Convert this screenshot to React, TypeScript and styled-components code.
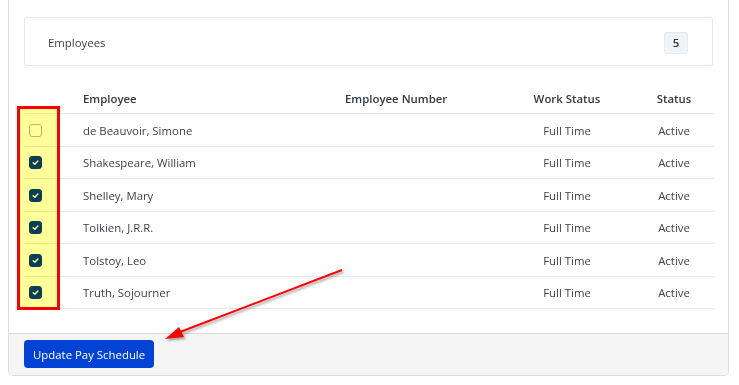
import styled, { createGlobalStyle } from 'styled-components';

const GlobalStyle = createGlobalStyle`
    html, body {
        margin: 0;
        padding: 0;
        background: #ffffff;
    }
    body {
        font-family: 'Open Sans', 'Noto Sans', 'Liberation Sans', sans-serif;
        font-size: 11.4px;
        color: #3d4250;
    }
`;

type T_Employee = {
    name: string;
    number: string;
    workStatus: string;
    status: string;
    checked: boolean;
};

const employees: T_Employee[] = [
    { name: 'de Beauvoir, Simone', number: '', workStatus: 'Full Time', status: 'Active', checked: false },
    { name: 'Shakespeare, William', number: '', workStatus: 'Full Time', status: 'Active', checked: true },
    { name: 'Shelley, Mary', number: '', workStatus: 'Full Time', status: 'Active', checked: true },
    { name: 'Tolkien, J.R.R.', number: '', workStatus: 'Full Time', status: 'Active', checked: true },
    { name: 'Tolstoy, Leo', number: '', workStatus: 'Full Time', status: 'Active', checked: true },
    { name: 'Truth, Sojourner', number: '', workStatus: 'Full Time', status: 'Active', checked: true },
];

const CheckBox = ({ checked }: { checked: boolean }) => (
    <Box checked={checked}>
        {checked && (
            <svg width="9" height="9" viewBox="0 0 10 10">
                <path
                    d="M2.4 5.2 L4.3 6.9 L7.6 3.4"
                    fill="none"
                    stroke="#ffffff"
                    strokeWidth="1.6"
                    strokeLinecap="round"
                    strokeLinejoin="round"
                />
            </svg>
        )}
    </Box>
);

const Annotations = () => (
    <>
        <Highlight />
        <ArrowSvg width="739" height="385" viewBox="0 0 739 385">
            <defs>
                <filter id="shadow" x="-10%" y="-10%" width="120%" height="130%">
                    <feDropShadow dx="1.5" dy="2" stdDeviation="1" floodColor="#000" floodOpacity="0.35" />
                </filter>
            </defs>
            <g filter="url(#shadow)">
                <line x1="342" y1="270" x2="180" y2="332" stroke="#ff0000" strokeWidth="2" />
                <polygon points="165,339 179,327 184,337" fill="#ff0000" />
            </g>
        </ArrowSvg>
    </>
);

export default function App() {
    return (
        <>
            <GlobalStyle />
            <Page>
                <Card>
                    <Body>
                        <CountBox>
                            <span>Employees</span>
                            <Badge>5</Badge>
                        </CountBox>
                        <Table>
                            <colgroup>
                                <col style={{ width: 47 }} />
                                <col style={{ width: 262 }} />
                                <col style={{ width: 167 }} />
                                <col style={{ width: 134 }} />
                                <col style={{ width: 80 }} />
                            </colgroup>
                            <thead>
                                <tr>
                                    <Th />
                                    <Th>Employee</Th>
                                    <Th>Employee Number</Th>
                                    <Th center>Work Status</Th>
                                    <Th center>Status</Th>
                                </tr>
                            </thead>
                            <tbody>
                                {employees.map((e) => (
                                    <tr key={e.name}>
                                        <CheckCell>
                                            <CheckBox checked={e.checked} />
                                        </CheckCell>
                                        <Td>{e.name}</Td>
                                        <Td>{e.number}</Td>
                                        <Td center>{e.workStatus}</Td>
                                        <Td center>{e.status}</Td>
                                    </tr>
                                ))}
                            </tbody>
                        </Table>
                    </Body>
                    <Footer>
                        <Button>Update Pay Schedule</Button>
                    </Footer>
                </Card>
                <Annotations />
            </Page>
        </>
    );
}

const Page = styled.div`
    position: relative;
    width: 739px;
    height: 385px;
    overflow: hidden;
    padding: 0 10px 0 8px;
    box-sizing: border-box;
`;

const Card = styled.div`
    border: 1px solid #dcdcdc;
    border-top: none;
    border-radius: 0 0 5px 5px;
    overflow: hidden;
    background: #ffffff;
`;

const Body = styled.div`
    padding: 17px 15px 24px 15px;
`;

const CountBox = styled.div`
    display: flex;
    align-items: center;
    justify-content: space-between;
    height: 45px;
    padding: 2px 24px 0 23px;
    border: 1px solid #e6e8eb;
    border-radius: 2px;
`;

const Badge = styled.span`
    display: flex;
    align-items: center;
    justify-content: center;
    width: 24px;
    height: 22px;
    box-sizing: border-box;
    background: #f1f4f7;
    border: 1px solid #e6eaee;
    border-radius: 3px;
    font-weight: 600;
    color: #2c3140;
`;

const Table = styled.table`
    width: 100%;
    margin-top: 16px;
    border-collapse: collapse;
    table-layout: fixed;
`;

const Th = styled.th<{ center?: boolean }>`
    height: 29px;
    padding: 2px 12px 0 12px;
    text-align: ${(p) => (p.center ? 'center' : 'left')};
    font-weight: 600;
    color: #333845;
    border-bottom: 1px solid #e5e7ea;
    vertical-align: middle;
`;

const Td = styled.td<{ center?: boolean }>`
    height: 30.5px;
    padding: 1px 12px 0 12px;
    text-align: ${(p) => (p.center ? 'center' : 'left')};
    border-bottom: 1px solid #e5e7ea;
    vertical-align: middle;
    white-space: nowrap;
`;

const CheckCell = styled(Td)`
    padding: 1px 0 0 5px;
`;

const Box = styled.span<{ checked: boolean }>`
    display: flex;
    align-items: center;
    justify-content: center;
    width: 13px;
    height: 13px;
    box-sizing: border-box;
    border-radius: 3px;
    background: ${(p) => (p.checked ? '#0c3f8f' : '#ffffff')};
    border: 1px solid ${(p) => (p.checked ? '#0c3f8f' : '#b9b9b9')};
`;

const Footer = styled.div`
    background: #f5f5f5;
    border-top: 1px solid #dadada;
    padding: 6px 15px 7px 15px;
`;

const Button = styled.button`
    height: 28px;
    padding: 0 9px;
    background: #0243d6;
    color: #ffffff;
    border: none;
    border-radius: 4px;
    font-family: inherit;
    font-size: 11.4px;
`;

const Highlight = styled.div`
    position: absolute;
    left: 17px;
    top: 106px;
    width: 43px;
    height: 204px;
    box-sizing: border-box;
    border: 3px solid #ff0000;
    background: #ffff99;
    mix-blend-mode: multiply;
    pointer-events: none;
`;

const ArrowSvg = styled.svg`
    position: absolute;
    left: 0;
    top: 0;
    pointer-events: none;
`;
